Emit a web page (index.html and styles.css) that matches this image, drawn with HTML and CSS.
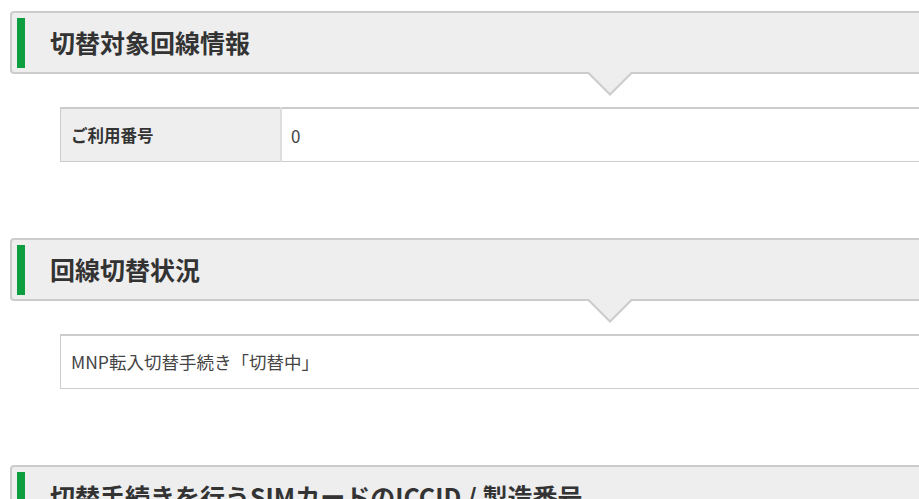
FILE: index.html
```html
<!DOCTYPE html>
<html lang="ja">

<head>
    <meta charset="UTF-8">
    <meta name="viewport" content="width=device-width, initial-scale=1.0">
    <title>回線切替</title>
    <link rel="stylesheet" href="styles.css">
</head>

<body>

    <div class="page">

        <!-- 切替対象回線情報 -->
        <div class="section-head">
            <h2>切替対象回線情報</h2>
        </div>
        <table class="info-table">
            <tr>
                <th>ご利用番号</th>
                <td>0</td>
            </tr>
        </table>

        <!-- 回線切替状況 -->
        <div class="section-head">
            <h2>回線切替状況</h2>
        </div>
        <div class="status-box">MNP転入切替手続き「切替中」</div>

        <!-- ICCID -->
        <div class="section-head">
            <h2>切替手続きを行うSIMカードのICCID / 製造番号</h2>
        </div>
        <div class="status-box">&nbsp;</div>

    </div>

</body>

</html>
```

FILE: styles.css
```css
html,
body {
    margin: 0;
    padding: 0;
    overflow-x: hidden;
    background: #fff;
    color: #333;
    font-family: "Noto Sans CJK JP", "Noto Sans", sans-serif;
}

.page {
    width: 1200px;
    padding: 11px 0 40px 10px;
}

.section-head {
    position: relative;
    background-color: #eee;
    border: 2px solid #ccc;
    border-radius: 4px;
    margin-bottom: 33px;
}

.section-head::before,
.section-head::after {
    content: "";
    position: absolute;
    left: 50%;
    top: 100%;
    width: 0;
    height: 0;
    border-style: solid;
    border-color: transparent;
}

.section-head::before {
    margin-left: -24px;
    border-width: 24px 24px 0 24px;
    border-top-color: #ccc;
}

.section-head::after {
    margin-left: -21px;
    border-width: 21px 21px 0 21px;
    border-top-color: #eee;
}

.section-head h2 {
    margin: 5px 5px 4px 5px;
    height: 50px;
    line-height: 48px;
    padding-left: 25px;
    border-left: 8px solid #0d9e3f;
    font-size: 25px;
    font-weight: bold;
    color: #333;
}

.info-table {
    margin: 0 50px 76px 50px;
    width: 1100px;
    border-collapse: collapse;
    border-top: 2px solid #ccc;
    border-bottom: 1px solid #ccc;
    border-left: 1px solid #ccc;
    font-size: 17px;
}

.info-table th,
.info-table td {
    height: 52px;
    padding: 0 10px;
    text-align: left;
    vertical-align: middle;
}

.info-table th {
    width: 199px;
    background-color: #eee;
    border-right: 2px solid #ddd;
    font-size: 16.5px;
    font-weight: bold;
}

.info-table td {
    padding-left: 9px;
    color: #444;
}

.status-box {
    margin: 0 50px 76px 50px;
    height: 52px;
    line-height: 52px;
    padding: 0 10px;
    border-top: 2px solid #ccc;
    border-bottom: 1px solid #ccc;
    border-left: 1px solid #ccc;
    color: #444;
    font-size: 17.5px;
}
```
